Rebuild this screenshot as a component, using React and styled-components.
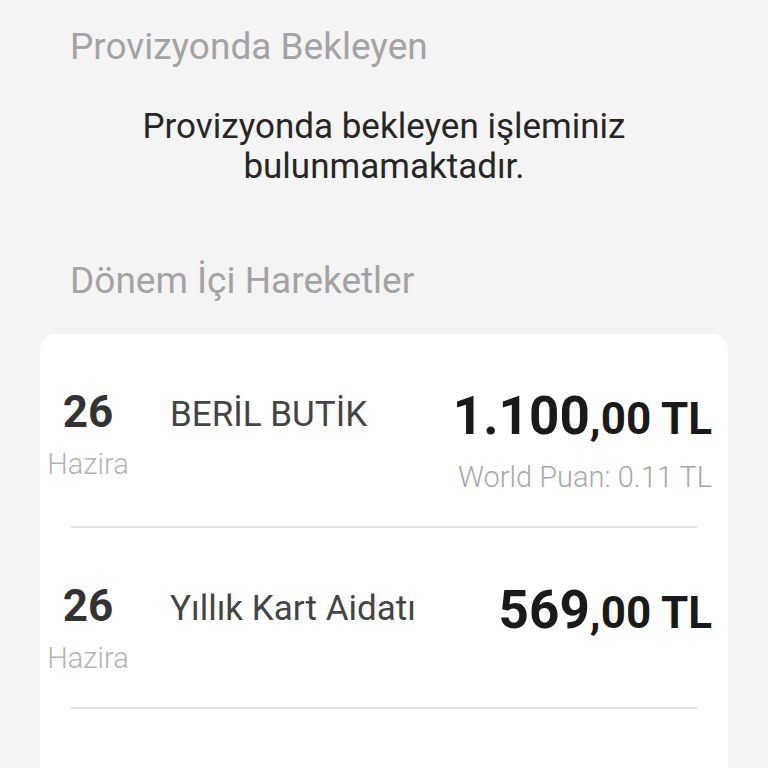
import React from 'react';
import styled, { createGlobalStyle } from 'styled-components';

const GlobalStyle = createGlobalStyle`
  html, body {
    margin: 0;
    padding: 0;
    background: #f4f4f4;
    font-family: Roboto, 'Noto Sans', sans-serif;
  }
`;

const Page = styled.div`
  display: flex;
  flex-direction: column;
  padding: 25px 40px 0;
  min-height: 768px;
  box-sizing: border-box;
`;

const SectionTitle = styled.h2`
  margin: 0;
  padding-left: 30px;
  font-size: 37px;
  line-height: 43px;
  font-weight: 400;
  color: #a3a3a3;
  white-space: nowrap;
`;

const EmptyMessage = styled.p`
  margin: 39px 0 72px;
  font-size: 35px;
  line-height: 40px;
  font-weight: 400;
  color: #262626;
  text-align: center;
`;

const Card = styled.div`
  margin-top: 32px;
  background: #ffffff;
  border-radius: 16px 16px 0 0;
  padding-bottom: 80px;
`;

const Row = styled.div`
  display: grid;
  grid-template-columns: 96px 1fr auto;
  align-items: start;
  padding: 52px 16px 32px 0;
`;

const Divider = styled.hr`
  margin: 0 31px;
  border: none;
  height: 2px;
  background: #e4e4e4;
`;

const DateCol = styled.div`
  display: flex;
  flex-direction: column;
  align-items: center;
`;

const Day = styled.span`
  font-size: 44px;
  line-height: 53px;
  font-weight: 700;
  color: #333;
`;

const Month = styled.span`
  margin-top: 8px;
  font-size: 29px;
  line-height: 34px;
  font-weight: 300;
  color: #b3b3b3;
`;

const Description = styled.div`
  margin: 7px 0 0 34px;
  font-size: 35px;
  line-height: 44px;
  font-weight: 400;
  color: #444;
  white-space: nowrap;
`;

const AmountCol = styled.div`
  display: flex;
  flex-direction: column;
  align-items: flex-end;
`;

const Amount = styled.div`
  display: flex;
  align-items: baseline;
  line-height: 60px;
  font-weight: 700;
  color: #1a1a1a;
`;

const Whole = styled.span`
  font-size: 53px;
`;

const Fraction = styled.span`
  font-size: 44px;
  white-space: pre;
`;

const Points = styled.div`
  margin-top: 11px;
  font-size: 29px;
  line-height: 34px;
  font-weight: 300;
  color: #a8a8a8;
  white-space: nowrap;
`;

const transactions = [
  { day: '26', month: 'Hazira', title: 'BERİL BUTİK', whole: '1.100', fraction: ',00 TL', points: 'World Puan: 0.11 TL' },
  { day: '26', month: 'Hazira', title: 'Yıllık Kart Aidatı', whole: '569', fraction: ',00 TL' },
];

export default function App() {
  return (
    <>
      <GlobalStyle />
      <Page>
        <SectionTitle>Provizyonda Bekleyen</SectionTitle>
        <EmptyMessage>
          Provizyonda bekleyen işleminiz
          <br />
          bulunmamaktadır.
        </EmptyMessage>
        <SectionTitle>Dönem İçi Hareketler</SectionTitle>
        <Card>
          {transactions.map((t, i) => (
            <React.Fragment key={i}>
              <Row>
                <DateCol>
                  <Day>{t.day}</Day>
                  <Month>{t.month}</Month>
                </DateCol>
                <Description>{t.title}</Description>
                <AmountCol>
                  <Amount>
                    <Whole>{t.whole}</Whole>
                    <Fraction>{t.fraction}</Fraction>
                  </Amount>
                  {t.points && <Points>{t.points}</Points>}
                </AmountCol>
              </Row>
              <Divider />
            </React.Fragment>
          ))}
        </Card>
      </Page>
    </>
  );
}
